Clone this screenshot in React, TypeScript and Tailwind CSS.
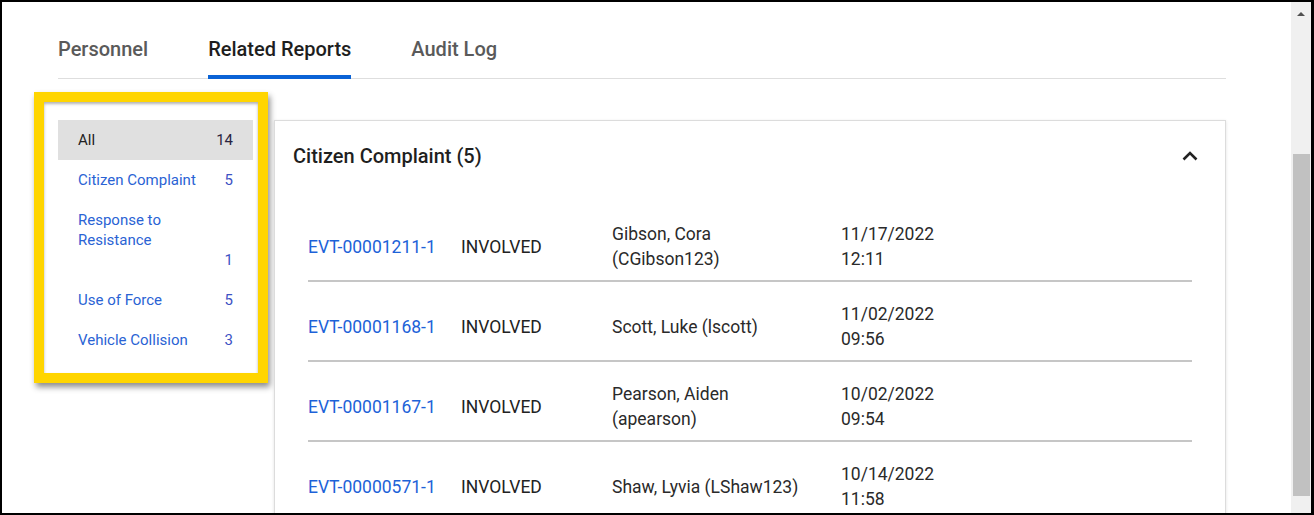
import React from "react";

const sideItems = [
  { label: "All", count: "14", active: true },
  { label: "Citizen Complaint", count: "5" },
  { label: "Response to Resistance", count: "1", wrap: true },
  { label: "Use of Force", count: "5" },
  { label: "Vehicle Collision", count: "3" },
];

const rows = [
  { id: "EVT-00001211-1", name: ["Gibson, Cora", "(CGibson123)"], date: ["11/17/2022", "12:11"] },
  { id: "EVT-00001168-1", name: ["Scott, Luke (lscott)"], date: ["11/02/2022", "09:56"] },
  { id: "EVT-00001167-1", name: ["Pearson, Aiden", "(apearson)"], date: ["10/02/2022", "09:54"] },
  { id: "EVT-00000571-1", name: ["Shaw, Lyvia (LShaw123)"], date: ["10/14/2022", "11:58"] },
];

export default function App() {
  return (
    <div
      className="h-[515px] w-[1314px] overflow-hidden bg-black border-t-2 border-l-2 border-b-2 border-r-[3px] border-black flex"
      style={{ fontFamily: "Roboto, 'Liberation Sans', sans-serif" }}
    >
      <div className="flex-1 bg-white overflow-hidden">
        {/* Tabs */}
        <div className="ml-[56px] w-[1168px] flex gap-[60px] border-b border-[#dedede]">
          {[
            { t: "Personnel" },
            { t: "Related Reports", active: true },
            { t: "Audit Log" },
          ].map((tab) => (
            <div
              key={tab.t}
              className={
                "pt-[35px] pb-[14px] text-[20px] leading-[24px] font-medium border-b-4 -mb-px " +
                (tab.active ? "text-[#1e1e1e] border-[#0a63d6]" : "text-[#5a5a5a] border-transparent")
              }
            >
              {tab.t}
            </div>
          ))}
        </div>

        <div className="flex items-start mt-[13px]">
          {/* Sidebar with yellow highlight */}
          <div className="ml-[32px] w-[234px] h-[291px] border-[10px] border-[#ffd500] shadow-[2px_4px_6px_rgba(0,0,0,0.45)] bg-white">
            <div className="h-full bg-white shadow-[inset_0_2px_3px_rgba(0,0,0,0.3)] pt-[18px] pl-[14px] pr-[5px]">
              {sideItems.map((it) =>
                it.wrap ? (
                  <div key={it.label} className="px-[20px] py-[10px] text-[15px] leading-[20px]">
                    <div className="text-[#2a63d4] w-[120px]">{it.label}</div>
                    <div className="text-right text-[#3d52c4]">{it.count}</div>
                  </div>
                ) : (
                  <div
                    key={it.label}
                    className={
                      "px-[20px] py-[10px] text-[15px] leading-[20px] flex justify-between " +
                      (it.active ? "bg-[#e0e0e0]" : "")
                    }
                  >
                    <span className={it.active ? "text-[#222]" : "text-[#2a63d4]"}>{it.label}</span>
                    <span className={it.active ? "text-[#2a2440]" : "text-[#3d52c4]"}>{it.count}</span>
                  </div>
                )
              )}
            </div>
          </div>

          {/* Main card */}
          <div className="ml-[6px] mt-[28px] w-[952px] h-[420px] border border-[#dcdcdc] shadow-[0_1px_3px_rgba(0,0,0,0.12)] bg-white">
            <div className="h-[81px] pt-[21px] pl-[18px] pr-[23px] flex justify-between items-start">
              <span className="text-[20px] leading-[28px] font-medium text-[#1f1f1f]">Citizen Complaint (5)</span>
              <svg width="24" height="28" viewBox="0 0 24 28" className="block">
                <path d="M5.5 17.5 L12 11 L18.5 17.5" fill="none" stroke="#222" strokeWidth="2.6" />
              </svg>
            </div>
            <div className="mx-[33px]">
              {rows.map((r) => (
                <div
                  key={r.id}
                  className="h-[80px] pt-[12px] flex items-center border-b-2 border-[#c6c6c6] text-[17.5px] leading-[25px]"
                >
                  <div className="w-[153px] text-[#1d62d8]">{r.id}</div>
                  <div className="w-[151px] text-[#222]">INVOLVED</div>
                  <div className="w-[229px] text-[#2a2a2a]">
                    {r.name.map((n) => (
                      <div key={n}>{n}</div>
                    ))}
                  </div>
                  <div className="text-[#2a2a2a]">
                    {r.date.map((d) => (
                      <div key={d}>{d}</div>
                    ))}
                  </div>
                </div>
              ))}
            </div>
          </div>
        </div>
      </div>

      {/* Scrollbar */}
      <div className="w-[20px] bg-[#f0f0f0] flex flex-col items-center">
        <svg width="20" height="22" viewBox="0 0 20 22" className="block">
          <path d="M6 14 L10 10 L14 14 Z" fill="#505050" />
        </svg>
        <div className="mt-[130px] ml-[1px] w-[17px] h-[342px] bg-[#c1c1c1]" />
      </div>
    </div>
  );
}
